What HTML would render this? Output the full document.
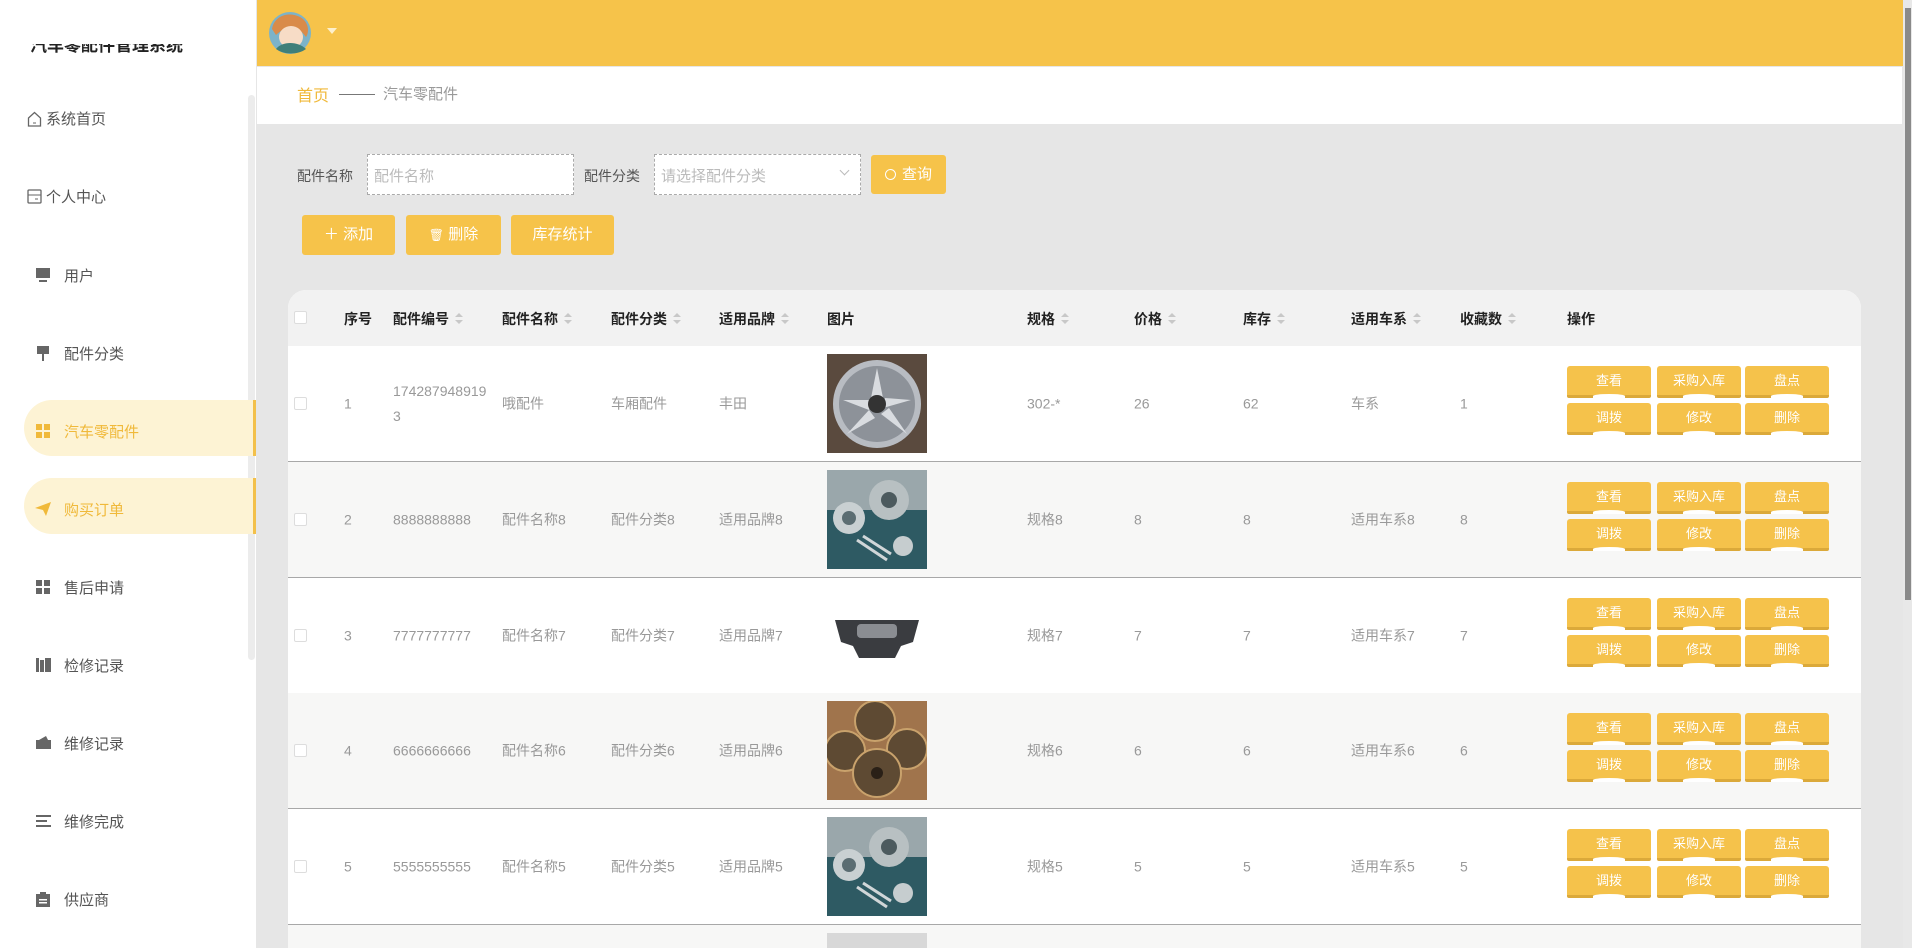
<!DOCTYPE html>
<html><head><meta charset="utf-8">
<style>
*{box-sizing:border-box;margin:0;padding:0}
html,body{width:1912px;height:948px;overflow:hidden}
body{background:#e6e6e6;font-family:"Liberation Sans","Noto Sans CJK SC",sans-serif;position:relative}
.side{position:absolute;left:0;top:0;width:256px;height:948px;background:#fff}
.side .track{position:absolute;left:248px;top:95px;width:7px;height:565px;background:#ececec;border-radius:4px}
.logo{position:absolute;left:30px;top:44px;height:9px;overflow:hidden;font-size:17px;font-weight:bold;color:#222;line-height:4px}
.mi{position:absolute;left:0;width:256px;font-size:15px;color:#555}
.mi .t{position:absolute;left:64px;top:-3px}
.pill{position:absolute;left:24px;width:232px;height:56px;background:#fdf3d4;border-radius:28px 0 0 28px;border-right:3px solid #f3c04a}
.hdr{position:absolute;left:257px;top:0;width:1646px;height:66px;background:#f6c34a}
.crumb{position:absolute;left:257px;top:67px;width:1645px;height:57px;background:#fff;font-size:16px}
.vs{position:absolute;left:1903px;top:0;width:9px;height:948px;background:#e8e8e8}
.vs i{position:absolute;left:2px;top:8px;width:6px;height:592px;background:#8a8a8a;display:block}
.lbl{position:absolute;font-size:14px;color:#555}
.inp{position:absolute;height:41px;border:1px dashed #aaa;background:#fff;font-size:15px;color:#bbb;padding:10px 6px}
.btn{position:absolute;background:#f6c34a;color:#fff;font-size:15px;border-radius:3px;text-align:center}
.tbl{position:absolute;left:288px;top:290px;width:1573px;height:658px;background:#fff;border-radius:18px 18px 0 0;overflow:hidden}
.th{position:absolute;left:0;top:0;width:100%;height:56px;background:#f2f2f2}
.th div{position:absolute;top:19px;font-size:14px;font-weight:bold;color:#222}
.sort{display:inline-block;width:8px;height:12px;margin-left:6px;vertical-align:-1px;position:relative}
.sort:before{content:"";position:absolute;left:0;top:0;border:4px solid transparent;border-bottom:4px solid #c8c8c8;border-top:0}
.sort:after{content:"";position:absolute;left:0;top:7px;border:4px solid transparent;border-top:4px solid #c8c8c8;border-bottom:0}
.row{position:absolute;left:0;width:100%;height:116px;border-bottom:1px solid #a8a8a8}
.row div.c{position:absolute;top:50%;transform:translateY(-50%);font-size:14px;color:#999;line-height:25px}
.cb{position:absolute;width:13px;height:13px;border:1px solid #ddd;background:#fff;border-radius:2px}
.img{position:absolute;left:539px;top:8px;width:100px;height:99px;overflow:hidden}
.ab{position:absolute;width:84px;height:32px;background:#f5c24b;color:#fff;font-size:13px;text-align:center;line-height:29px;border-radius:3px 3px 2px 2px;border-bottom:3px solid #dba93a}
.ab:after{content:"";position:absolute;left:26px;bottom:-3px;width:32px;height:4px;background:#fff;border-radius:50% 50% 0 0}
</style></head><body>
<div class="side">
 <div class="logo">汽车零配件管理系统</div>
 <div class="track"></div>
 <div class="pill" style="top:400px"></div>
 <div class="pill" style="top:478px"></div>
 <div class="mi" style="top:111px;color:#555"><svg style="position:absolute;left:27px;top:0" width="15" height="16" viewBox="0 0 15 16"><path d="M1.5 7L7.5 1.5 13.5 7V15H1.5Z" fill="none" stroke="#666" stroke-width="1.3"/><path d="M6 12h3" stroke="#666"/></svg><span class="t" style="left:46px">系统首页</span></div>
 <div class="mi" style="top:189px"><svg style="position:absolute;left:27px;top:0" width="15" height="15" viewBox="0 0 15 15"><rect x="1" y="1" width="13" height="13" rx="1" fill="none" stroke="#666" stroke-width="1.3"/><path d="M1 6h13M8 10h3" stroke="#666"/></svg><span class="t" style="left:46px">个人中心</span></div>
 <div class="mi" style="top:268px"><svg style="position:absolute;left:36px;top:0" width="14" height="15"><rect x="0" y="0" width="14" height="10" fill="#666"/><rect x="3" y="12" width="8" height="2" fill="#666"/></svg><span class="t">用户</span></div>
 <div class="mi" style="top:346px"><svg style="position:absolute;left:36px;top:0" width="14" height="15"><rect x="1" y="0" width="12" height="8" fill="#666"/><rect x="6" y="8" width="2" height="7" fill="#666"/></svg><span class="t">配件分类</span></div>
 <div class="mi" style="top:424px;color:#f0b93a"><svg style="position:absolute;left:36px;top:0" width="14" height="14"><rect width="6" height="6" fill="#f0b93a"/><rect x="8" width="6" height="6" fill="#f0b93a"/><rect y="8" width="6" height="6" fill="#f0b93a"/><rect x="8" y="8" width="6" height="6" fill="#f0b93a"/></svg><span class="t">汽车零配件</span></div>
 <div class="mi" style="top:502px;color:#f0b93a"><svg style="position:absolute;left:35px;top:0" width="16" height="14"><path d="M0 6L16 0 11 14 8 8Z" fill="#f0b93a"/></svg><span class="t">购买订单</span></div>
 <div class="mi" style="top:580px"><svg style="position:absolute;left:36px;top:0" width="14" height="14"><rect width="6" height="6" fill="#666"/><rect x="8" width="6" height="6" fill="#666"/><rect y="8" width="6" height="6" fill="#666"/><rect x="8" y="8" width="6" height="6" fill="#666"/></svg><span class="t">售后申请</span></div>
 <div class="mi" style="top:658px"><svg style="position:absolute;left:36px;top:0" width="15" height="14"><rect width="3" height="14" fill="#666"/><rect x="4" y="2" width="4" height="12" fill="#666"/><rect x="9" y="0" width="6" height="14" fill="#666"/></svg><span class="t">检修记录</span></div>
 <div class="mi" style="top:736px"><svg style="position:absolute;left:36px;top:0" width="15" height="14"><rect y="4" width="15" height="9" fill="#666"/><path d="M3 4L10 0 12 4" fill="#666"/></svg><span class="t">维修记录</span></div>
 <div class="mi" style="top:814px"><svg style="position:absolute;left:36px;top:0" width="15" height="14"><rect y="1" width="15" height="2" fill="#666"/><rect y="6" width="11" height="2" fill="#666"/><rect y="11" width="15" height="2" fill="#666"/></svg><span class="t">维修完成</span></div>
 <div class="mi" style="top:892px"><svg style="position:absolute;left:36px;top:0" width="14" height="15"><rect y="2" width="14" height="13" fill="#666"/><rect x="4" y="0" width="6" height="3" fill="#666"/><rect x="3" y="7" width="8" height="1.5" fill="#fff"/><rect x="3" y="10" width="8" height="1.5" fill="#fff"/></svg><span class="t">供应商</span></div>
</div>
<div class="hdr">
 <svg style="position:absolute;left:11px;top:11px" width="44" height="44" viewBox="0 0 44 44"><circle cx="22" cy="22" r="21" fill="#7cb3c9"/><path d="M4 18C6 5 20 0 32 6 40 10 42 20 38 26 30 14 18 14 8 24Z" fill="#d98b4a"/><ellipse cx="23" cy="26" rx="12" ry="11" fill="#f7dcc6"/><path d="M8 38C14 30 30 30 38 38 30 44 16 44 8 38Z" fill="#3f7f7a"/></svg>
 <div style="position:absolute;left:70px;top:28px;border:5px solid transparent;border-top:6px solid #fdf0cc"></div>
</div>
<div class="crumb"><span style="position:absolute;left:40px;top:15px;color:#f0b93a">首页</span><span style="position:absolute;left:82px;top:27px;width:36px;height:1px;background:#777"></span><span style="position:absolute;left:126px;top:16px;color:#999;font-size:15px">汽车零配件</span></div>
<div class="vs"><i></i></div>

<div class="lbl" style="left:297px;top:166px">配件名称</div>
<div class="inp" style="left:367px;top:154px;width:207px">配件名称</div>
<div class="lbl" style="left:584px;top:166px">配件分类</div>
<div class="inp" style="left:654px;top:154px;width:207px">请选择配件分类<span style="position:absolute;right:12px;top:12px;width:7px;height:7px;border-right:1px solid #bbb;border-bottom:1px solid #bbb;transform:rotate(45deg)"></span></div>
<div class="btn" style="left:871px;top:155px;width:75px;height:39px;line-height:39px"><span style="display:inline-block;width:11px;height:11px;border:1.5px solid #fff;border-radius:50%;margin-right:6px;vertical-align:-1px"></span>查询</div>
<div class="btn" style="left:302px;top:215px;width:93px;height:40px;line-height:40px">＋ 添加</div>
<div class="btn" style="left:406px;top:215px;width:95px;height:40px;line-height:40px"><span style="font-size:12px">🗑</span> 删除</div>
<div class="btn" style="left:511px;top:215px;width:103px;height:40px;line-height:40px">库存统计</div>

<div class="tbl">
 <div class="th">
  <span class="cb" style="left:6px;top:21px"></span>
  <div style="left:56px">序号</div>
  <div style="left:105px">配件编号<i class="sort"></i></div>
  <div style="left:214px">配件名称<i class="sort"></i></div>
  <div style="left:323px">配件分类<i class="sort"></i></div>
  <div style="left:431px">适用品牌<i class="sort"></i></div>
  <div style="left:539px">图片</div>
  <div style="left:739px">规格<i class="sort"></i></div>
  <div style="left:846px">价格<i class="sort"></i></div>
  <div style="left:955px">库存<i class="sort"></i></div>
  <div style="left:1063px">适用车系<i class="sort"></i></div>
  <div style="left:1172px">收藏数<i class="sort"></i></div>
  <div style="left:1279px">操作</div>
 </div>
 <div class="row" style="top:56px;background:#fff">
  <span class="cb" style="left:6px;top:51px"></span>
  <div class="c" style="left:56px">1</div><div class="c" style="left:105px;width:95px;word-break:break-all">1742879489193</div>
  <div class="c" style="left:214px">哦配件</div><div class="c" style="left:323px">车厢配件</div><div class="c" style="left:431px">丰田</div>
  <div class="img" style="background:#5a4a3e"><svg width="100" height="99"><circle cx="50" cy="50" r="44" fill="#b8bcc2"/><circle cx="50" cy="50" r="38" fill="#8d9299"/><g fill="#d9dce0"><path d="M50 14l6 30h-12z"/><path d="M84 46l-28 8 2-10z"/><path d="M20 80l22-24 6 8z"/><path d="M80 80l-26-20 8-6z"/><path d="M16 46l28 0 -2 10z"/></g><circle cx="50" cy="50" r="9" fill="#333"/></svg></div>
  <div class="c" style="left:739px">302-*</div><div class="c" style="left:846px">26</div><div class="c" style="left:955px">62</div><div class="c" style="left:1063px">车系</div><div class="c" style="left:1172px">1</div>
 </div>
 <div class="row" style="top:172px;background:#f7f7f6">
  <span class="cb" style="left:6px;top:51px"></span>
  <div class="c" style="left:56px">2</div><div class="c" style="left:105px">8888888888</div>
  <div class="c" style="left:214px">配件名称8</div><div class="c" style="left:323px">配件分类8</div><div class="c" style="left:431px">适用品牌8</div>
  <div class="img" style="background:#2e5a63"><svg width="100" height="99"><rect width="100" height="40" fill="#9aa7ab"/><circle cx="22" cy="48" r="16" fill="#c9d0d2"/><circle cx="22" cy="48" r="7" fill="#5b6d72"/><circle cx="62" cy="30" r="20" fill="#b8c0c2"/><circle cx="62" cy="30" r="8" fill="#4c5a5e"/><circle cx="76" cy="76" r="10" fill="#c6cdcf"/><path d="M30 70l30 20M36 66l28 18" stroke="#d0d6d8" stroke-width="3"/></svg></div>
  <div class="c" style="left:739px">规格8</div><div class="c" style="left:846px">8</div><div class="c" style="left:955px">8</div><div class="c" style="left:1063px">适用车系8</div><div class="c" style="left:1172px">8</div>
 </div>
 <div class="row" style="top:288px;background:#fff">
  <span class="cb" style="left:6px;top:51px"></span>
  <div class="c" style="left:56px">3</div><div class="c" style="left:105px">7777777777</div>
  <div class="c" style="left:214px">配件名称7</div><div class="c" style="left:323px">配件分类7</div><div class="c" style="left:431px">适用品牌7</div>
  <div class="img" style="background:#fff"><svg width="100" height="99"><path d="M8 34h84l-6 22-12 4-6 12H32l-6-12-12-4z" fill="#3a3c40"/><rect x="30" y="38" width="40" height="14" rx="4" fill="#8a8d92"/></svg></div>
  <div class="c" style="left:739px">规格7</div><div class="c" style="left:846px">7</div><div class="c" style="left:955px">7</div><div class="c" style="left:1063px">适用车系7</div><div class="c" style="left:1172px">7</div>
 </div>
 <div class="row" style="top:403px;background:#f7f7f6">
  <span class="cb" style="left:6px;top:51px"></span>
  <div class="c" style="left:56px">4</div><div class="c" style="left:105px">6666666666</div>
  <div class="c" style="left:214px">配件名称6</div><div class="c" style="left:323px">配件分类6</div><div class="c" style="left:431px">适用品牌6</div>
  <div class="img" style="background:#a0744c"><svg width="100" height="99"><g fill="#5e4a33" stroke="#c9a26c" stroke-width="2"><circle cx="48" cy="20" r="20"/><circle cx="18" cy="50" r="20"/><circle cx="80" cy="48" r="20"/><circle cx="50" cy="72" r="24"/></g><circle cx="50" cy="72" r="6" fill="#2a2017"/></svg></div>
  <div class="c" style="left:739px">规格6</div><div class="c" style="left:846px">6</div><div class="c" style="left:955px">6</div><div class="c" style="left:1063px">适用车系6</div><div class="c" style="left:1172px">6</div>
 </div>
 <div class="row" style="top:519px;background:#fff">
  <span class="cb" style="left:6px;top:51px"></span>
  <div class="c" style="left:56px">5</div><div class="c" style="left:105px">5555555555</div>
  <div class="c" style="left:214px">配件名称5</div><div class="c" style="left:323px">配件分类5</div><div class="c" style="left:431px">适用品牌5</div>
  <div class="img" style="background:#2e5a63"><svg width="100" height="99"><rect width="100" height="40" fill="#9aa7ab"/><circle cx="22" cy="48" r="16" fill="#c9d0d2"/><circle cx="22" cy="48" r="7" fill="#5b6d72"/><circle cx="62" cy="30" r="20" fill="#b8c0c2"/><circle cx="62" cy="30" r="8" fill="#4c5a5e"/><circle cx="76" cy="76" r="10" fill="#c6cdcf"/><path d="M30 70l30 20M36 66l28 18" stroke="#d0d6d8" stroke-width="3"/></svg></div>
  <div class="c" style="left:739px">规格5</div><div class="c" style="left:846px">5</div><div class="c" style="left:955px">5</div><div class="c" style="left:1063px">适用车系5</div><div class="c" style="left:1172px">5</div>
 </div>
 <div class="row" style="top:635px;height:23px;background:#f7f7f6;border:none">
  <div class="img" style="background:#d8d8d8"></div>
 </div>
</div>
<div class="ab" style="left:1567px;top:366px">查看</div><div class="ab" style="left:1657px;top:366px">采购入库</div><div class="ab" style="left:1745px;top:366px">盘点</div>
<div class="ab" style="left:1567px;top:403px">调拨</div><div class="ab" style="left:1657px;top:403px">修改</div><div class="ab" style="left:1745px;top:403px">删除</div>
<div class="ab" style="left:1567px;top:482px">查看</div><div class="ab" style="left:1657px;top:482px">采购入库</div><div class="ab" style="left:1745px;top:482px">盘点</div>
<div class="ab" style="left:1567px;top:519px">调拨</div><div class="ab" style="left:1657px;top:519px">修改</div><div class="ab" style="left:1745px;top:519px">删除</div>
<div class="ab" style="left:1567px;top:598px">查看</div><div class="ab" style="left:1657px;top:598px">采购入库</div><div class="ab" style="left:1745px;top:598px">盘点</div>
<div class="ab" style="left:1567px;top:635px">调拨</div><div class="ab" style="left:1657px;top:635px">修改</div><div class="ab" style="left:1745px;top:635px">删除</div>
<div class="ab" style="left:1567px;top:713px">查看</div><div class="ab" style="left:1657px;top:713px">采购入库</div><div class="ab" style="left:1745px;top:713px">盘点</div>
<div class="ab" style="left:1567px;top:750px">调拨</div><div class="ab" style="left:1657px;top:750px">修改</div><div class="ab" style="left:1745px;top:750px">删除</div>
<div class="ab" style="left:1567px;top:829px">查看</div><div class="ab" style="left:1657px;top:829px">采购入库</div><div class="ab" style="left:1745px;top:829px">盘点</div>
<div class="ab" style="left:1567px;top:866px">调拨</div><div class="ab" style="left:1657px;top:866px">修改</div><div class="ab" style="left:1745px;top:866px">删除</div>
</body></html>
